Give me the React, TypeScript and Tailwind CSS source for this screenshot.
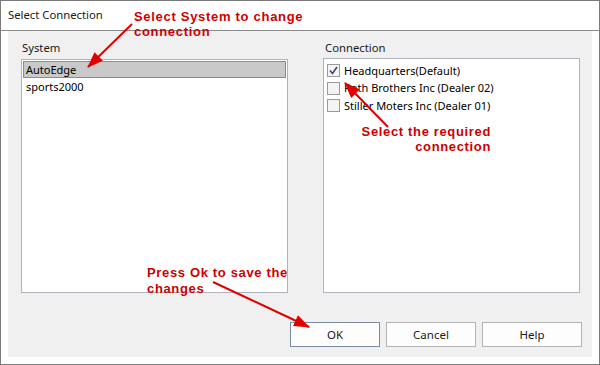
import React from "react";

const ui = { fontFamily: '"Noto Sans", "Open Sans", sans-serif' };
const red = { fontFamily: '"Liberation Sans", Arial, sans-serif' };

function Check({ checked }: { checked?: boolean }) {
  return (
    <div className="w-[13px] h-[13px] border border-[#9a9a9a] bg-[#f4f4f4] flex items-center justify-center shrink-0">
      {checked && (
        <svg width="9" height="9" viewBox="0 0 9 9">
          <path d="M1 4.5 L3.5 7.5 L8 1" fill="none" stroke="#3c4a5c" strokeWidth="1.6" />
        </svg>
      )}
    </div>
  );
}

function Btn({ label, w, dark }: { label: string; w: string; dark?: boolean }) {
  return (
    <div
      className={`${w} h-[25px] flex items-center justify-center bg-[#fdfdfd] border text-[11.5px] text-[#1a1a1a] ${
        dark ? "border-[#7a8ba0]" : "border-[#b4b4b4]"
      }`}
    >
      {label}
    </div>
  );
}

export default function App() {
  return (
    <div className="relative w-[600px] h-[365px] border border-[#7a7a7a] bg-white flex flex-col text-black" style={ui}>
      <div className="h-[30px] shrink-0 border-b border-[#8a8a8a] flex items-center pl-[7px] text-[11.3px] text-[#1a1a1a]">
        Select Connection
      </div>
      <div className="flex-1 flex px-[7px] pb-[7px]">
        <div className="flex-1 bg-[#f0f0f0] flex flex-col pt-[8px] pl-[13px] pr-[10px] pb-[10px]">
          <div className="flex gap-[35px] pr-[2px]">
            <div className="w-[267px] flex flex-col">
              <div className="text-[11.3px] h-[17px] leading-[17px] pl-[1px] text-[#1a1a1a]">System</div>
              <div className="mt-[3px] h-[234px] border border-[#adb4be] bg-white p-[1px] flex flex-col">
                <div className="h-[17px] border border-[#8c8c8c] bg-[#c9c9c9] text-[11px] leading-[15px] pl-[2px]">AutoEdge</div>
                <div className="h-[18px] text-[11px] leading-[18px] pl-[3px]">sports2000</div>
              </div>
            </div>
            <div className="w-[257px] flex flex-col">
              <div className="text-[11.3px] h-[17px] leading-[17px] pl-[2px] text-[#1a1a1a]">Connection</div>
              <div className="mt-[2px] h-[235px] border border-[#adb4be] bg-white pt-[3px] pl-[3px] flex flex-col">
                {[
                  ["Headquarters(Default)", true],
                  ["Roth Brothers Inc (Dealer 02)", false],
                  ["Stiller Moters Inc (Dealer 01)", false],
                ].map(([t, c]) => (
                  <div key={t as string} className="h-[17.5px] flex items-center gap-[4px] text-[11px]">
                    <Check checked={c as boolean} />
                    <span>{t as string}</span>
                  </div>
                ))}
              </div>
            </div>
          </div>
          <div className="flex-1" />
          <div className="flex justify-end gap-[6px]">
            <Btn label="OK" w="w-[90px]" dark />
            <Btn label="Cancel" w="w-[90px]" />
            <Btn label="Help" w="w-[100px]" />
          </div>
        </div>
      </div>

      <div className="absolute left-[133px] top-[8px] text-[13px] leading-[15px] font-bold tracking-[0.7px] text-[#cc0000]" style={red}>
        Select System to change
        <br />
        connection
      </div>
      <div className="absolute right-[108px] top-[123px] text-[13px] leading-[15px] font-bold tracking-[0.65px] text-[#cc0000] text-right" style={red}>
        Select the required
        <br />
        connection
      </div>
      <div className="absolute left-[146px] top-[264px] text-[13px] leading-[16px] font-bold tracking-[0.65px] text-[#cc0000]" style={red}>
        Press Ok to save the
        <br />
        changes
      </div>

      <svg className="absolute left-[-1px] top-[-1px] pointer-events-none" width="600" height="365">
        <defs>
          <marker id="ah" markerUnits="userSpaceOnUse" markerWidth="16" markerHeight="12" refX="15" refY="6" orient="auto">
            <path d="M0 0 L16 6 L0 12 Z" fill="#e00000" />
          </marker>
        </defs>
        <line x1="132" y1="24" x2="88" y2="67" stroke="#e00000" strokeWidth="2" markerEnd="url(#ah)" />
        <line x1="388" y1="127" x2="345" y2="83" stroke="#e00000" strokeWidth="2" markerEnd="url(#ah)" />
        <line x1="213" y1="282" x2="309" y2="327" stroke="#e00000" strokeWidth="2" markerEnd="url(#ah)" />
      </svg>
    </div>
  );
}
